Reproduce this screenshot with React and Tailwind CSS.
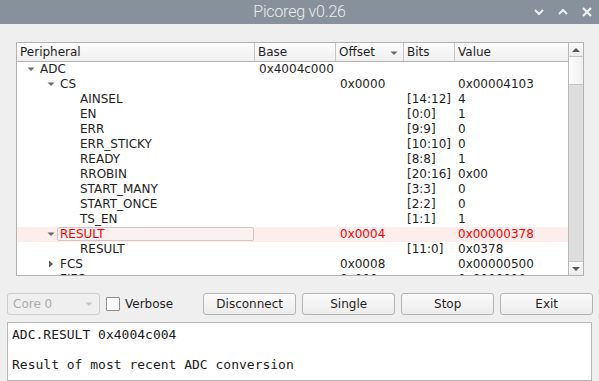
import React from 'react';

const rows = [
  { name: 'ADC', level: 0, arrow: 'down', base: '0x4004c000' },
  { name: 'CS', level: 1, arrow: 'down', offset: '0x0000', value: '0x00004103' },
  { name: 'AINSEL', level: 2, bits: '[14:12]', value: '4' },
  { name: 'EN', level: 2, bits: '[0:0]', value: '1' },
  { name: 'ERR', level: 2, bits: '[9:9]', value: '0' },
  { name: 'ERR_STICKY', level: 2, bits: '[10:10]', value: '0' },
  { name: 'READY', level: 2, bits: '[8:8]', value: '1' },
  { name: 'RROBIN', level: 2, bits: '[20:16]', value: '0x00' },
  { name: 'START_MANY', level: 2, bits: '[3:3]', value: '0' },
  { name: 'START_ONCE', level: 2, bits: '[2:2]', value: '0' },
  { name: 'TS_EN', level: 2, bits: '[1:1]', value: '1' },
  { name: 'RESULT', level: 1, arrow: 'down', offset: '0x0004', value: '0x00000378', selected: true },
  { name: 'RESULT', level: 2, bits: '[11:0]', value: '0x0378' },
  { name: 'FCS', level: 1, arrow: 'right', offset: '0x0008', value: '0x00000500' },
  { name: 'FIFO', level: 1, arrow: 'right', offset: '0x000c', value: '0x0000010c' },
];

const indent = ['pl-[23px]', 'pl-[43px]', 'pl-[63px]'];
const arrowPos = ['left-[10px]', 'left-[30px]', 'left-[50px]'];

function Arrow({ dir }) {
  if (dir === 'right') {
    return (
      <svg width="8" height="8" viewBox="0 0 8 8">
        <path d="M2 0.5 L6 4 L2 7.5 Z" fill="#5a5a5a" />
      </svg>
    );
  }
  return (
    <svg width="8" height="8" viewBox="0 0 8 8">
      <path d="M0.5 2.5 L7.5 2.5 L4 6 Z" fill="#6a6a6a" />
    </svg>
  );
}

function Row({ r }) {
  const red = r.selected ? 'text-[#ff0000]' : 'text-[#1e1e1e]';
  return (
    <div className={`grid grid-cols-[238px_81px_68px_51px_113px] h-[15px] leading-[15px] ${r.selected ? 'bg-[#fdeded]' : ''} ${red}`}>
      <div className={`relative ${r.selected ? 'pl-[40px]' : indent[r.level]}`}>
        {r.arrow && (
          <span className={`absolute top-[3px] ${arrowPos[r.level]}`}>
            <Arrow dir={r.arrow} />
          </span>
        )}
        {r.selected ? (
          <div className="h-[14px] leading-[12px] border border-[#d6c4c4] rounded-[2px] bg-[#fcf1f1] pl-[2px] mr-[1px] -ml-[0px]">{r.name}</div>
        ) : (
          r.name
        )}
      </div>
      <div className="pl-[4px]">{r.base}</div>
      <div className="pl-[4px]">{r.offset}</div>
      <div className="pl-[3px]">{r.bits}</div>
      <div className="pl-[3px]">{r.value}</div>
    </div>
  );
}

function HeaderCell({ children, last, sort }) {
  return (
    <div className={`relative h-full pl-[3px] flex items-center ${last ? '' : 'border-r border-[#c6c6c6]'}`}>
      {children}
      {sort && (
        <span className="absolute right-[5px] top-[6px]">
          <Arrow dir="down" />
        </span>
      )}
    </div>
  );
}

function Button({ children }) {
  return (
    <button className="w-[93px] h-[22px] rounded-[3px] border border-[#b4b4b4] bg-gradient-to-b from-[#fbfbfb] to-[#ececec] text-[12px] text-[#1e1e1e]">
      {children}
    </button>
  );
}

export default function App() {
  return (
    <div className="w-[599px] h-[381px] overflow-hidden bg-[#efefef] font-['DejaVu_Sans',sans-serif] text-[12px] text-[#1e1e1e] flex flex-col">
      {/* title bar */}
      <div className="h-[24px] shrink-0 bg-[#87919b] relative flex items-center justify-center">
        <span className="font-['Roboto',sans-serif] font-light text-[16px] text-[#e9edf0] tracking-[-0.2px]">Picoreg v0.26</span>
        <div className="absolute right-[7px] top-0 h-full flex items-center gap-[14px]">
          <svg width="10" height="8" viewBox="0 0 10 8">
            <path d="M1 2 L5 6 L9 2" stroke="#eef1f3" strokeWidth="2" fill="none" />
          </svg>
          <svg width="10" height="8" viewBox="0 0 10 8">
            <path d="M1 6 L5 2 L9 6" stroke="#eef1f3" strokeWidth="2" fill="none" />
          </svg>
          <svg width="10" height="10" viewBox="0 0 10 10">
            <path d="M1 1 L9 9 M9 1 L1 9" stroke="#eef1f3" strokeWidth="2.2" fill="none" />
          </svg>
        </div>
      </div>

      {/* tree view */}
      <div className="ml-[16px] mt-[18px] w-[568px] h-[234px] shrink-0 border border-[#b2b2b2] bg-white flex">
        <div className="w-[551px] flex flex-col overflow-hidden">
          <div className="h-[19px] shrink-0 grid grid-cols-[238px_81px_68px_51px_113px] bg-gradient-to-b from-[#fdfdfd] to-[#efefef] border-b border-[#b4b4b4]">
            <HeaderCell>Peripheral</HeaderCell>
            <HeaderCell>Base</HeaderCell>
            <HeaderCell sort>Offset</HeaderCell>
            <HeaderCell>Bits</HeaderCell>
            <HeaderCell last>Value</HeaderCell>
          </div>
          <div className="flex flex-col">
            {rows.map((r, i) => (
              <Row key={i} r={r} />
            ))}
          </div>
        </div>
        {/* scrollbar */}
        <div className="w-[15px] border-l border-[#b8b8b8] flex flex-col bg-[#dedede]">
          <div className="h-[14px] bg-gradient-to-b from-[#fafafa] to-[#ececec] border-b border-[#c4c4c4] flex items-center justify-center">
            <svg width="8" height="6" viewBox="0 0 8 6">
              <path d="M0 5 L4 1 L8 5 Z" fill="#555" />
            </svg>
          </div>
          <div className="h-[28px] bg-gradient-to-r from-[#fbfbfb] to-[#f0f0f0] border-b border-[#c4c4c4]" />
          <div className="flex-1" />
          <div className="h-[14px] bg-gradient-to-b from-[#fafafa] to-[#ececec] border-t border-[#c4c4c4] flex items-center justify-center">
            <svg width="8" height="6" viewBox="0 0 8 6">
              <path d="M0 1 L8 1 L4 5 Z" fill="#555" />
            </svg>
          </div>
        </div>
      </div>

      {/* controls */}
      <div className="mt-[17px] ml-[7px] h-[22px] shrink-0 flex items-center">
        <div className="w-[93px] h-[22px] rounded-[3px] border border-[#cdcdcd] bg-[#efefef] text-[#ababab] flex items-center pl-[5px] relative">
          Core 0
          <span className="absolute right-[6px] top-[6px]">
            <svg width="8" height="8" viewBox="0 0 8 8">
              <path d="M0.5 2.5 L7.5 2.5 L4 6 Z" fill="#c4c4c4" />
            </svg>
          </span>
        </div>
        <div className="ml-[6px] w-[14px] h-[14px] border border-[#8e8e8e] bg-white rounded-[1px]" />
        <span className="ml-[5px]">Verbose</span>
        <div className="ml-[30px] flex gap-[6px]">
          <Button>Disconnect</Button>
          <Button>Single</Button>
          <Button>Stop</Button>
          <Button>Exit</Button>
        </div>
      </div>

      {/* description */}
      <div className="mt-[7px] ml-[7px] w-[585px] flex-1 border border-[#b8b8b8] bg-white px-[4px] pt-[4px] font-['DejaVu_Sans_Mono',monospace] text-[13px] leading-[15px] text-[#1a1a1a]">
        <div>ADC.RESULT 0x4004c004</div>
        <div>&nbsp;</div>
        <div>Result of most recent ADC conversion</div>
      </div>
    </div>
  );
}
